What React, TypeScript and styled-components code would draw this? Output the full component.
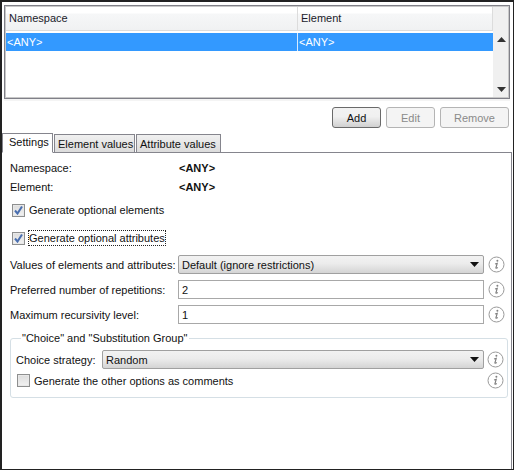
import React from 'react';
import styled, { createGlobalStyle } from 'styled-components';

const GlobalStyle = createGlobalStyle`
  html, body { margin: 0; padding: 0; background: #fff; }
  body { font-family: "Liberation Sans", Arial, sans-serif; font-size: 11px; color: #111; white-space: nowrap; }
`;

const Frame = styled.div`
  width: 514px;
  height: 470px;
  box-sizing: border-box;
  border: 1px solid #222;
  border-left-width: 2px;
  border-top-width: 2px;
  display: flex;
  flex-direction: column;
  background: #fff;
`;

const TableBox = styled.div`
  margin: 3px 3px 0 2px;
  height: 94px;
  box-sizing: border-box;
  border: 1px solid #808088;
  outline: 1px solid #c8c8c8;
  outline-offset: -2px;
  display: flex;
  background: #fff;
  box-shadow: 0 2px 0 #f4f4f4;
`;

const TableMain = styled.div`
  flex: 1;
  padding: 0 0 0 1px;
  min-width: 0;
`;

const HeaderRow = styled.div`
  height: 24px;
  display: grid;
  grid-template-columns: 292px 1fr;
  background: linear-gradient(#ffffff 0 7px, #f6f7f8 8px, #f0f1f2);
  border-bottom: 1px solid #dcdcdc;
  margin-bottom: 2px;
`;

const HeaderCell = styled.div`
  display: flex;
  align-items: center;
  padding-left: 3px;
  border-right: 1px solid #dcdcdc;
  color: #1a1a2a;
`;

const DataRow = styled.div`
  height: 18px;
  display: grid;
  grid-template-columns: 292px 1fr;
  background: #3399ff;
  color: #fff;
  margin-right: -2px;
`;

const DataCell = styled.div<{ $divider?: boolean }>`
  display: flex;
  align-items: center;
  padding-left: 1px;
  border-right: ${(p) => (p.$divider ? '1px solid #d8ebff' : 'none')};
`;

const ScrollBar = styled.div`
  width: 16px;
  background: #f0f0f0;
  display: flex;
  flex-direction: column;
  justify-content: space-between;
  align-items: center;
  padding: 31px 0 6px;
  box-sizing: border-box;
`;

const Toolbar = styled.div`
  display: flex;
  justify-content: flex-end;
  gap: 5px;
  margin: 8px 3px 0 0;
  padding-right: 1px;
`;

const Button = styled.div<{ $primary?: boolean }>`
  width: 49px;
  height: 21px;
  box-sizing: border-box;
  border-radius: 3px;
  display: flex;
  align-items: center;
  justify-content: center;
  color: ${(p) => (p.$primary ? '#111' : '#8a8a8a')};
  border: 1px solid ${(p) => (p.$primary ? '#6a6a6a' : '#b4b4b4')};
  background: ${(p) => (p.$primary ? 'linear-gradient(#f2f2f2, #f0f0f0 45%, #d0d0d0)' : '#f4f4f4')};
`;

const RemoveButton = styled(Button)`
  width: 69px;
`;

const Tabs = styled.div`
  display: flex;
  align-items: flex-end;
  margin-top: 4px;
  height: 20px;
`;

const Tab = styled.div<{ $active?: boolean; $width: number }>`
  width: ${(p) => p.$width}px;
  height: ${(p) => (p.$active ? 20 : 18)}px;
  box-sizing: border-box;
  margin-right: 1px;
  display: flex;
  align-items: center;
  padding-left: ${(p) => (p.$active ? 6 : 3)}px;
  padding-bottom: ${(p) => (p.$active ? 2 : 0)}px;
  border: 1px solid #85858d;
  border-bottom: ${(p) => (p.$active ? '1px solid #fff' : 'none')};
  background: ${(p) => (p.$active ? '#fff' : 'linear-gradient(#f0f0f0, #dcdcdc)')};
  position: relative;
  z-index: 1;
  margin-bottom: ${(p) => (p.$active ? '-1px' : '0')};
`;

const Panel = styled.div`
  flex: 1;
  border-top: 1px solid #85858d;
  border-right: 1px solid #85858d;
  margin-right: 1px;
  padding: 5px 0 0 8px;
  display: flex;
  flex-direction: column;
`;

const InfoRow = styled.div<{ $height: number }>`
  height: ${(p) => p.$height}px;
  display: flex;
  align-items: center;
`;

const InfoLabel = styled.div`
  width: 169px;
`;

const InfoValue = styled.div`
  font-weight: 700;
`;

const CheckRow = styled.div<{ $top: number; $indent: number }>`
  display: flex;
  align-items: center;
  gap: 4px;
  height: 14px;
  margin-top: ${(p) => p.$top}px;
  margin-left: ${(p) => p.$indent}px;
`;

const CheckBoxSquare = styled.div`
  width: 13px;
  height: 13px;
  box-sizing: border-box;
  border: 1px solid #8e8f8f;
  outline: 1px solid #e8e8e8;
  outline-offset: -2px;
  background: linear-gradient(#dcdcdc, #f2f2f2);
  display: flex;
  align-items: center;
  justify-content: center;
`;

const CheckText = styled.span<{ $focused?: boolean }>`
  outline: ${(p) => (p.$focused ? '1px dotted #222' : 'none')};
  line-height: 14px;
`;

const FormRow = styled.div<{ $top: number }>`
  display: grid;
  grid-template-columns: 168px 306px 26px;
  align-items: center;
  margin-top: ${(p) => p.$top}px;
`;

const InnerRow = styled.div`
  display: grid;
  grid-template-columns: 86px 382px 23px;
  align-items: center;
`;

const Select = styled.div`
  height: 19px;
  box-sizing: border-box;
  border: 1px solid #a0a0a0;
  border-radius: 2px;
  padding: 0 4px 0 3px;
  display: flex;
  align-items: center;
  justify-content: space-between;
  background: linear-gradient(#f2f2f2, #ececec 45%, #d4d4d4);
`;

const TextInput = styled.div`
  height: 19px;
  box-sizing: border-box;
  border: 1px solid #a8a8a8;
  padding-left: 3px;
  display: flex;
  align-items: center;
  background: #fff;
`;

const InfoSlot = styled.div<{ $gap: number }>`
  display: flex;
  justify-content: flex-end;
  padding-right: ${(p) => p.$gap}px;
  height: 17px;
`;

const Group = styled.fieldset`
  margin: 8px 2px 0 0;
  width: 498px;
  box-sizing: border-box;
  height: 66px;
  border: 1px solid #d5dfe5;
  border-radius: 3px;
  padding: 5px 0 0 5px;
  min-width: 0;
`;

const GroupLegend = styled.legend`
  padding: 0 2px 0 1px;
  margin-left: 5px;
  line-height: 13px;
`;

const GroupCheck = styled.div`
  display: flex;
  justify-content: space-between;
  align-items: center;
  margin-top: 3px;
`;

const Check = () => (
  <svg width="11" height="11" viewBox="0 0 11 11">
    <path d="M2 5.5 L4.5 8.5 L9 1.5" fill="none" stroke="#4a6fb0" strokeWidth="2" />
  </svg>
);

const Info = () => (
  <svg width="17" height="17" viewBox="0 0 17 17">
    <circle cx="8.5" cy="8.5" r="7.5" fill="#fff" stroke="#9a9a9a" />
    <circle cx="9.4" cy="4.8" r="1" fill="#808080" />
    <path d="M7 8 L9.2 7.4 L7.9 11.8 Q7.8 12.8 9.8 11.4" fill="none" stroke="#808080" strokeWidth="1.2" />
  </svg>
);

const Arrow = ({ up, color = '#333' }: { up?: boolean; color?: string }) => (
  <svg width="9" height="5" viewBox="0 0 9 5">
    <path d={up ? 'M4.5 0 L9 5 L0 5 Z' : 'M0 0 L9 0 L4.5 5 Z'} fill={color} />
  </svg>
);

const App: React.FC = () => {
  return (
    <Frame>
      <GlobalStyle />
      <TableBox>
        <TableMain>
          <HeaderRow>
            <HeaderCell>Namespace</HeaderCell>
            <HeaderCell>Element</HeaderCell>
          </HeaderRow>
          <DataRow>
            <DataCell $divider>&lt;ANY&gt;</DataCell>
            <DataCell>&lt;ANY&gt;</DataCell>
          </DataRow>
        </TableMain>
        <ScrollBar>
          <Arrow up />
          <Arrow />
        </ScrollBar>
      </TableBox>

      <Toolbar>
        <Button $primary>Add</Button>
        <Button>Edit</Button>
        <RemoveButton>Remove</RemoveButton>
      </Toolbar>

      <Tabs>
        <Tab $active $width={51}>Settings</Tab>
        <Tab $width={81}>Element values</Tab>
        <Tab $width={85}>Attribute values</Tab>
      </Tabs>

      <Panel>
        <InfoRow $height={19}>
          <InfoLabel>Namespace:</InfoLabel>
          <InfoValue>&lt;ANY&gt;</InfoValue>
        </InfoRow>
        <InfoRow $height={19}>
          <InfoLabel>Element:</InfoLabel>
          <InfoValue>&lt;ANY&gt;</InfoValue>
        </InfoRow>
        <CheckRow $top={7} $indent={2}>
          <CheckBoxSquare><Check /></CheckBoxSquare>
          <CheckText>Generate optional elements</CheckText>
        </CheckRow>
        <CheckRow $top={14} $indent={2}>
          <CheckBoxSquare><Check /></CheckBoxSquare>
          <CheckText $focused>Generate optional attributes</CheckText>
        </CheckRow>
        <FormRow $top={10}>
          <span>Values of elements and attributes:</span>
          <Select>
            <span>Default (ignore restrictions)</span>
            <Arrow color="#111" />
          </Select>
          <InfoSlot $gap={5}><Info /></InfoSlot>
        </FormRow>
        <FormRow $top={6}>
          <span>Preferred number of repetitions:</span>
          <TextInput>2</TextInput>
          <InfoSlot $gap={5}><Info /></InfoSlot>
        </FormRow>
        <FormRow $top={6}>
          <span>Maximum recursivity level:</span>
          <TextInput>1</TextInput>
          <InfoSlot $gap={5}><Info /></InfoSlot>
        </FormRow>
        <Group>
          <GroupLegend>"Choice" and "Substitution Group"</GroupLegend>
          <InnerRow>
            <span>Choice strategy:</span>
            <Select>
              <span>Random</span>
              <Arrow color="#111" />
            </Select>
            <InfoSlot $gap={3}><Info /></InfoSlot>
          </InnerRow>
          <GroupCheck>
            <CheckRow $top={0} $indent={1}>
              <CheckBoxSquare />
              <CheckText>Generate the other options as comments</CheckText>
            </CheckRow>
            <InfoSlot $gap={3}><Info /></InfoSlot>
          </GroupCheck>
        </Group>
      </Panel>
    </Frame>
  );
};

export default App;
